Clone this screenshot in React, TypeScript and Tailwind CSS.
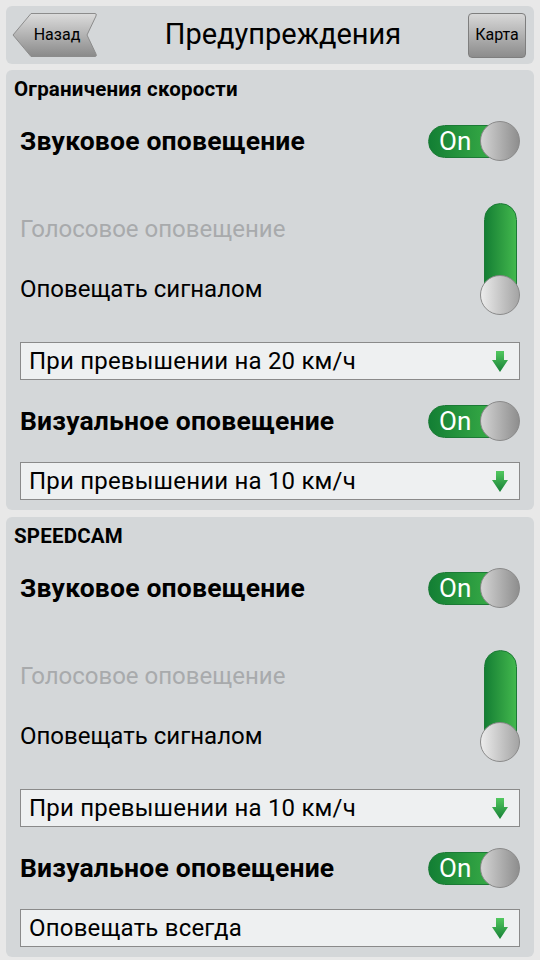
import React from "react";

const font = { fontFamily: "Roboto, 'Noto Sans', sans-serif" };

function BackButton() {
  return (
    <button className="relative w-[86px] h-[46px] ml-[6px] flex items-center justify-center">
      <svg className="absolute inset-0" width="86" height="46" viewBox="0 0 86 46">
        <defs>
          <linearGradient id="backg" x1="0" y1="0" x2="0" y2="1">
            <stop offset="0" stopColor="#dcdcdc" />
            <stop offset="1" stopColor="#8a8a8a" />
          </linearGradient>
        </defs>
        <path d="M1 23 L19 1.5 L83 1.5 Q85 1.5 84 4 L75 23 L84 42 Q85 44.5 83 44.5 L19 44.5 Z" fill="url(#backg)" stroke="#8c8c8c" strokeWidth="1" />
      </svg>
      <span className="relative text-[16px] text-black pl-[4px]">Назад</span>
    </button>
  );
}

function HToggle() {
  return (
    <div className="relative w-[92px] h-[40px] flex items-center">
      <div className="w-[84px] h-[33px] rounded-full bg-gradient-to-r from-[#127f34] to-[#41b94c] border border-[#1c7a36] flex items-center pl-[10px]">
        <span className="text-white text-[26px] leading-none">On</span>
      </div>
      <div className="absolute right-0 top-0 w-[40px] h-[40px] rounded-full bg-gradient-to-r from-[#d4d4d4] to-[#8e8e8e] border border-[#8a8a8a]" />
    </div>
  );
}

function VToggle() {
  return (
    <div className="relative w-[40px] h-[112px] flex justify-center">
      <div className="w-[33px] h-[96px] rounded-t-full bg-gradient-to-r from-[#137f34] to-[#42b84d] border border-[#1c7a36]" />
      <div className="absolute left-0 bottom-0 w-[40px] h-[40px] rounded-full bg-gradient-to-r from-[#ececec] to-[#a4a4a4] border border-[#8a8a8a]" />
    </div>
  );
}

function Arrow() {
  return (
    <svg width="16" height="21" viewBox="0 0 16 21">
      <defs>
        <linearGradient id="arrg" x1="0" y1="0" x2="0" y2="1">
          <stop offset="0" stopColor="#52c85f" />
          <stop offset="1" stopColor="#178036" />
        </linearGradient>
      </defs>
      <polygon points="4,0 12,0 12,9 16,9 8,21 0,9 4,9" fill="url(#arrg)" />
    </svg>
  );
}

function Dropdown({ text }: { text: string }) {
  return (
    <div className="mx-[14px] h-[38px] border border-[#8a8a8a] bg-[#eef0f1] flex items-center justify-between pl-[8px] pr-[11px]">
      <span className="text-[24px] tracking-[0.2px] text-black">{text}</span>
      <Arrow />
    </div>
  );
}

function Section({ title, d1, d2 }: { title: string; d1: string; d2: string }) {
  return (
    <div className="rounded-[6px] bg-[#d4d7d9] pb-[10px]">
      <div className="h-[38px] flex items-center px-[8px] text-[20.5px] tracking-[0.2px] font-bold text-black">{title}</div>
      <div className="h-[66px] flex items-center justify-between px-[14px]">
        <span className="text-[26.5px] tracking-[0.2px] font-bold text-black">Звуковое оповещение</span>
        <HToggle />
      </div>
      <div className="mt-[25px] h-[120px] flex items-center justify-between px-[14px]">
        <div className="flex flex-col">
          <span className="h-[60px] flex items-center text-[24px] text-[#a8aaac]">Голосовое оповещение</span>
          <span className="h-[60px] flex items-center text-[24px] text-black">Оповещать сигналом</span>
        </div>
        <VToggle />
      </div>
      <div className="mt-[23px]">
        <Dropdown text={d1} />
      </div>
      <div className="h-[82px] flex items-center justify-between px-[14px]">
        <span className="text-[26.5px] tracking-[0.2px] font-bold text-black">Визуальное оповещение</span>
        <HToggle />
      </div>
      <Dropdown text={d2} />
    </div>
  );
}

export default function App() {
  return (
    <div className="w-[540px] h-[960px] bg-[#e8e8e8] px-[6px] pt-[6px] overflow-hidden" style={font}>
      <div className="h-[58px] rounded-[6px] bg-[#d4d7d9] flex items-center">
        <BackButton />
        <div className="flex-1 text-center text-[29px] text-black">Предупреждения</div>
        <button className="w-[58px] h-[45px] mr-[8px] rounded-[4px] border border-[#7e7e7e] bg-gradient-to-b from-[#d8d8d8] to-[#8c8c8c] text-[16px] text-black">
          Карта
        </button>
      </div>
      <div className="mt-[6px]">
        <Section title="Ограничения скорости" d1="При превышении на 20 км/ч" d2="При превышении на 10 км/ч" />
      </div>
      <div className="mt-[7px]">
        <Section title="SPEEDCAM" d1="При превышении на 10 км/ч" d2="Оповещать всегда" />
      </div>
    </div>
  );
}
